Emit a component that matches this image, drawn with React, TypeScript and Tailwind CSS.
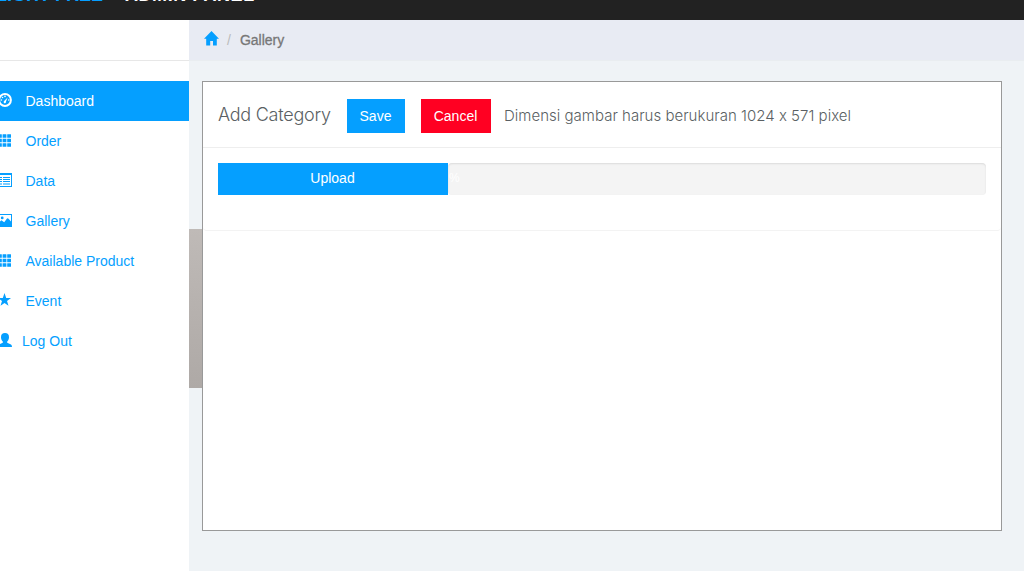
import React from "react";

const svgProps = { viewBox: "0 0 14 14", width: 14, height: 14, fill: "currentColor", className: "block shrink-0" };

const DashIcon = () => (
  <svg {...svgProps}>
    <circle cx="7" cy="7" r="5.9" fill="none" stroke="currentColor" strokeWidth="2" />
    <path d="M6.1 8.1 9.6 4.6 8 8.6A1.2 1.2 0 1 1 6.1 8.1Z" />
    <circle cx="3.4" cy="7" r=".8" /><circle cx="4.5" cy="4.5" r=".8" /><circle cx="7" cy="3.4" r=".8" /><circle cx="10.7" cy="7" r=".8" />
  </svg>
);
const GridIcon = () => (
  <svg {...svgProps}>
    {[1.2, 5.7, 10.2].map((y) => [0, 4.6, 9.2].map((x) => <rect key={`${x}-${y}`} x={x} y={y} width="3.8" height="3.6" rx=".3" />))}
  </svg>
);
const ListIcon = () => (
  <svg {...svgProps}>
    <path fillRule="evenodd" d="M0 0H14V14H0ZM1 2V13H13V2Z" />
    <path d="M2 4H4V5H2ZM5 4H12V5H5ZM2 6H4V7H2ZM5 6H12V7H5ZM2 8H4V9H2ZM5 8H12V9H5ZM2 10.5H4V11.5H2ZM5 10.5H12V11.5H5Z" />
  </svg>
);
const PictureIcon = () => (
  <svg {...svgProps}>
    <path fillRule="evenodd" d="M0 1H14V14H0ZM1 2V9.5L3.4 7.2 6.2 9.2 9.2 5.3 10.6 5.8 13 8.6V2Z" />
    <circle cx="4.2" cy="4.9" r="1.4" />
  </svg>
);
const StarIcon = () => (
  <svg {...svgProps}><path d="M6.5 0 8.2 4.9H13L9 8 10.5 12.8 6.5 9.9 2.5 12.8 4 8 0 4.9H4.8Z" /></svg>
);
const UserIcon = () => (
  <svg {...svgProps}><path d="M7 0C9.6 0 11 1.4 11 4.2 11 6 10.2 7.5 9.2 8.6V9.7L13 11.5Q14 12 14 14H0Q0 12 1 11.5L4.8 9.7V8.6C3.8 7.5 3 6 3 4.2 3 1.4 4.4 0 7 0Z" /></svg>
);
const HomeIcon = () => (
  <svg viewBox="0 0 15 15" width="15" height="15" fill="#059fff" className="-mt-[3px] block shrink-0">
    <path d="M7.5 0 15 7.8H12.8V14.5H9V10H6.2V14.5H2.2V7.8H0Z" />
  </svg>
);

const items = [
  { label: "Dashboard", Icon: DashIcon, gap: "ml-[13.5px]", active: true },
  { label: "Order", Icon: GridIcon, gap: "ml-[13.5px]" },
  { label: "Data", Icon: ListIcon, gap: "ml-[13.5px]" },
  { label: "Gallery", Icon: PictureIcon, gap: "ml-[13.5px]" },
  { label: "Available Product", Icon: GridIcon, gap: "ml-[13.5px]" },
  { label: "Event", Icon: StarIcon, gap: "ml-[13.5px]" },
  { label: "Log Out", Icon: UserIcon, gap: "ml-[10px]" },
];

export default function App() {
  return (
    <div className="flex h-[571px] w-[1024px] flex-col overflow-hidden bg-[#eff3f6] font-['Liberation_Sans',Arial,sans-serif] text-[14px]">
      <header className="flex h-5 shrink-0 overflow-hidden bg-[#222] text-[18px] font-bold leading-5 whitespace-pre">
        <div className="-mt-[15px] -ml-[4px] flex h-5">
          <span className="w-[129px] text-[#059fff]">LIGHT FREE</span>
          <span className="tracking-[0.55px] text-white">ADMIN PANEL</span>
        </div>
      </header>
      <div className="flex min-h-0 flex-1">
        <aside className="w-[189px] shrink-0 bg-white">
          <div className="h-[41px] border-b border-[#e7e7e7]" />
          <nav className="mt-5">
            {items.map(({ label, Icon, gap, active }) => (
              <a key={label} className={`flex h-10 items-center ${active ? "bg-[#059fff] text-white" : "text-[#059fff]"}`}>
                <span className="-mt-[2px] -ml-[2px]"><Icon /></span>
                <span className={`${gap} whitespace-nowrap`}>{label}</span>
              </a>
            ))}
          </nav>
        </aside>
        <main className="flex min-w-0 flex-1 flex-col">
          <div className="flex h-[41px] shrink-0 items-center border-b border-[#e9edf0] bg-[#e8ebf3] pl-[15px]">
            <HomeIcon />
            <span className="ml-[8px] text-[#bbb]">/</span>
            <span className="ml-[9px] text-[#777] [-webkit-text-stroke:0.3px_#777]">Gallery</span>
          </div>
          <div className="flex min-h-0 flex-1">
            <div className="mt-[168px] h-[159px] w-[13px] shrink-0 bg-linear-to-b from-[#bfbab7] to-[#aea9a6]" />
            <section className="mt-5 h-[450px] w-[800px] shrink-0 border border-[#999] bg-white">
              <div className="flex h-[66px] border-b border-[#eee] pl-[15px] text-[#5a5f63]">
                <h1 className="mt-[22px] w-[129px] font-[Inter,'Liberation_Sans',sans-serif] text-[18px] leading-[22px] font-light tracking-[-0.25px] whitespace-nowrap">Add Category</h1>
                <button className="mt-[17px] h-[34px] w-[58px] bg-[#059fff] pr-px text-white">Save</button>
                <button className="mt-[17px] ml-4 h-[34px] w-[70px] bg-[#ff0022] pr-px text-white">Cancel</button>
                <p className="mt-[24px] ml-[13px] font-[Inter,'Liberation_Sans',sans-serif] text-[15px] leading-5 font-light tracking-[0.02px] whitespace-nowrap [font-feature-settings:'calt'_0]">Dimensi gambar harus berukuran 1024 x 571 pixel</p>
              </div>
              <div className="flex h-[83px] rounded-b border-b border-[#f3f3f3] px-[15px] pt-[15px]">
                <button className="h-8 w-[230px] bg-[#059fff] pr-px pb-[2px] text-white">Upload</button>
                <div className="h-8 flex-1 rounded bg-[#f4f4f4] pl-px text-[12px] leading-[30px] text-white shadow-[inset_0_1px_2px_rgba(0,0,0,0.1)]">%</div>
              </div>
            </section>
          </div>
        </main>
      </div>
    </div>
  );
}
